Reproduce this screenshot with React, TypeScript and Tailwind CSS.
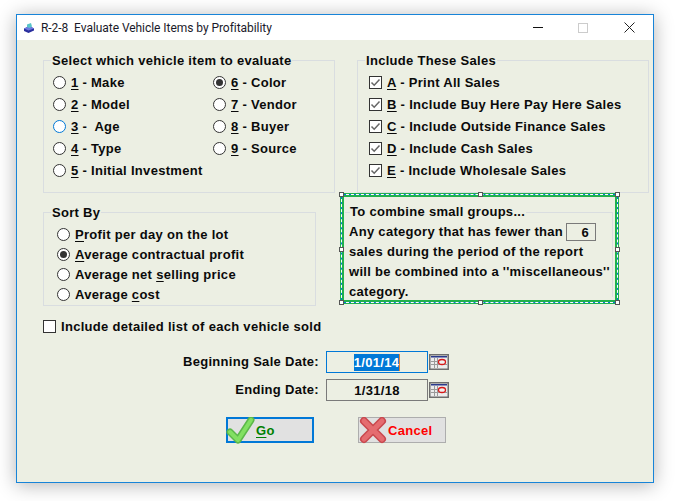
const font = "font-['Liberation_Sans',Arial,sans-serif] font-bold text-[13px] leading-none tracking-[0.3px] text-[#0a0a0a]";

const Radio = ({ checked, focus }: { checked?: boolean; focus?: boolean }) => (
  <span
    className={`flex h-[13px] w-[13px] shrink-0 items-center justify-center rounded-full border bg-white ${
      focus ? 'border-[#0078d7]' : 'border-[#333333]'
    }`}
  >
    {checked && <span className="h-[7px] w-[7px] rounded-full bg-[#333333]" />}
  </span>
);

const Check = ({ checked }: { checked?: boolean }) => (
  <span className="flex h-[13px] w-[13px] shrink-0 items-center justify-center border border-[#333333] bg-white">
    {checked && (
      <svg width="11" height="11" viewBox="0 0 11 11" fill="none">
        <path d="M1.5 5.5 L4.2 8.2 L9.5 2.5" stroke="#666666" strokeWidth="1.5" />
      </svg>
    )}
  </span>
);

const Group = ({ title, className, children }: { title: string; className: string; children: React.ReactNode }) => (
  <div className={`relative border border-[#d9dde0] ${className}`}>
    <span className={`absolute left-[7px] top-[-7px] whitespace-nowrap bg-[#ecefe3] px-px ${font}`}>{title}</span>
    {children}
  </div>
);

const RadioRow = ({ u, rest, checked, focus }: { u: string; rest: string; checked?: boolean; focus?: boolean }) => (
  <div className="flex h-[22px] items-center gap-[5px]">
    <Radio checked={checked} focus={focus} />
    <span className={`whitespace-pre ${font}`}>
      <u className="underline-offset-2">{u}</u>
      {rest}
    </span>
  </div>
);

const SortRow = ({ pre, u, rest, checked }: { pre?: string; u: string; rest: string; checked?: boolean }) => (
  <div className="flex h-[20px] items-center gap-[5px]">
    <Radio checked={checked} />
    <span className={`whitespace-pre ${font}`}>
      {pre}
      <u className="underline-offset-2">{u}</u>
      {rest}
    </span>
  </div>
);

const CheckRow = ({ u, rest }: { u: string; rest: string }) => (
  <div className="flex h-[22px] items-center gap-[5px]">
    <Check checked />
    <span className={`whitespace-pre ${font}`}>
      <u className="underline-offset-2">{u}</u>
      {rest}
    </span>
  </div>
);

const Handle = ({ className }: { className: string }) => (
  <span className={`absolute h-[5px] w-[5px] border border-[#555555] bg-white ${className}`} />
);

const CalendarIcon = () => (
  <svg width="20" height="16" viewBox="0 0 20 16" className="ml-px shrink-0">
    <rect x="0.75" y="0.75" width="18.500" height="14.500" fill="#ececec" stroke="#6e6e6e" strokeWidth="1.500" />
    <rect x="2" y="2" width="16" height="1.500" fill="#2a3a8c" />
    <path d="M5.500 4v10M8.500 4v10M2 7.500h8M2 10.500h16" stroke="#9a9a9a" fill="none" />
    <ellipse cx="13" cy="8" rx="3.500" ry="2.500" fill="#f0f0f0" stroke="#d81818" strokeWidth="1.300" />
  </svg>
);

const DateRow = ({ label, value, selected }: { label: string; value: string; selected?: boolean }) => (
  <div className="flex items-center">
    <span className={`w-[283px] pb-[2px] pr-[7px] text-right ${font}`}>{label}</span>
    <span
      className={`flex h-[22px] w-[102px] items-center justify-center border ${
        selected ? 'border-[#0078d7]' : 'border-[#7a7a7a]'
      }`}
    >
      <span className={`${font} ${selected ? 'border-r border-[#e08030] bg-[#0078d7] py-[2px] !text-white' : ''}`}>{value}</span>
    </span>
    <CalendarIcon />
  </div>
);

export default function App() {
  return (
    <div className="h-[501px] w-[679px] overflow-hidden bg-white pl-4 pt-[14px]">
      <div className="flex h-[469px] w-[638px] flex-col border border-[#1884d8] bg-[#ecefe3] shadow-[0_2px_18px_rgba(0,0,0,0.3)]">
        {/* Title bar */}
        <div className="flex h-[25px] shrink-0 items-center bg-white pl-[6px]">
          <svg width="12" height="12" viewBox="0 0 12 12" className="mt-px">
            <path d="M1 6.500 L6.500 4 L11 6.500 L11 8.500 L5.500 11 L1 9 Z" fill="#2a2f9e" />
            <path d="M1 6.500 L5.500 8.500 L11 6.500 L6.500 4 Z" fill="#6f7be0" />
            <path d="M4 5 L4 2.500 L8 1 L9 4.500 L6.500 6 Z" fill="#57c4c9" />
          </svg>
          <span className="ml-[6px] whitespace-pre font-['Roboto',sans-serif] text-[12px] leading-none tracking-[-0.05px] text-[#1a1a2a]">
            R-2-8  Evaluate Vehicle Items by Profitability
          </span>
          <div className="ml-auto flex items-center">
            <span className="h-[1px] w-[10px] bg-[#111111]" />
            <span className="ml-[35px] h-[10px] w-[10px] border border-[#cccccc]" />
            <svg width="11" height="11" viewBox="0 0 11 11" className="ml-[36px] mr-[18px]">
              <path d="M0.500 0.500 L10.500 10.500 M10.500 0.500 L0.500 10.500" stroke="#222222" strokeWidth="1" />
            </svg>
          </div>
        </div>

        {/* Body */}
        <div className="flex flex-col pl-[26px] pt-5">
          <div className="flex gap-[22px]">
            <Group title="Select which vehicle item to evaluate" className="h-[133px] w-[292px] pl-[9px] pt-[10px]">
              <div className="grid grid-cols-[160px_1fr]">
                <RadioRow u="1" rest=" - Make" />
                <RadioRow u="6" rest=" - Color" checked />
                <RadioRow u="2" rest=" - Model" />
                <RadioRow u="7" rest=" - Vendor" />
                <RadioRow u="3" rest=" -  Age" focus />
                <RadioRow u="8" rest=" - Buyer" />
                <RadioRow u="4" rest=" - Type" />
                <RadioRow u="9" rest=" - Source" />
                <RadioRow u="5" rest=" - Initial Investment" />
              </div>
            </Group>
            <Group title="Include These Sales" className="h-[133px] w-[292px] pl-[11px] pt-[10px]">
              <CheckRow u="A" rest=" - Print All Sales" />
              <CheckRow u="B" rest=" - Include Buy Here Pay Here Sales" />
              <CheckRow u="C" rest=" - Include Outside Finance Sales" />
              <CheckRow u="D" rest=" - Include Cash Sales" />
              <CheckRow u="E" rest=" - Include Wholesale Sales" />
            </Group>
          </div>

          <div className="flex items-start">
            <Group title="Sort By" className="mt-[19px] h-[94px] w-[273px] pl-[13px] pt-[11px]">
              <SortRow u="P" rest="rofit per day on the lot" />
              <SortRow u="A" rest="verage contractual profit" checked />
              <SortRow pre="Average net " u="s" rest="elling price" />
              <SortRow pre="Average " u="c" rest="ost" />
            </Group>

            {/* Selected note frame */}
            <div className="relative ml-[24px] h-[111px] w-[279px] border-[4px] border-[#22b14c]">
              <span className="absolute inset-[-3px] border border-[#0078d7]" />
              <span className="absolute inset-[-3px] border border-dashed border-white" />
              <Handle className="left-[-5px] top-[-5px]" />
              <Handle className="left-[134px] top-[-5px]" />
              <Handle className="right-[-5px] top-[-5px]" />
              <Handle className="left-[-5px] top-[50px]" />
              <Handle className="right-[-5px] top-[50px]" />
              <Handle className="bottom-[-5px] left-[-5px]" />
              <Handle className="bottom-[-5px] left-[134px]" />
              <Handle className="bottom-[-5px] right-[-5px]" />
              <div className="ml-px mt-[15px] h-[85px] w-[268px] border-r border-t border-[#d9dde0]" />
              <div className={`absolute left-[6px] top-[8px] whitespace-nowrap bg-[#ecefe3] pr-px ${font}`}>
                To combine small groups...
              </div>
              <div className="absolute left-[5px] top-[25px] flex h-[20px] items-center whitespace-nowrap">
                <span className={`w-[217px] pb-[2px] ${font}`}>Any category that has fewer than</span>
                <span className={`flex h-[18px] w-[30px] items-center justify-end border border-[#7a7a7a] pr-[6px] ${font}`}>
                  6
                </span>
              </div>
              <div className={`absolute left-[5px] top-[44px] flex flex-col whitespace-nowrap ${font}`}>
                <span className="flex h-[20px] items-center">sales during the period of the report</span>
                <span className="flex h-[20px] items-center">will be combined into a ''miscellaneous''</span>
                <span className="flex h-[20px] items-center">category.</span>
              </div>
            </div>
          </div>

          <div className="mt-[14px] flex h-[13px] items-center gap-[5px]">
            <Check />
            <span className={font}>Include detailed list of each vehicle sold</span>
          </div>

          <div className="mt-[18px] flex flex-col gap-[6px]">
            <DateRow label="Beginning Sale Date:" value="1/01/14" selected />
            <DateRow label="Ending Date:" value="1/31/18" />
          </div>

          <div className="ml-[183px] mt-4 flex gap-[44px]">
            <button className="relative flex h-[26px] w-[88px] items-center border-2 border-[#0078d7] bg-[#e1e1e1] pl-[28px]">
              <svg width="30" height="30" viewBox="0 0 30 30" fill="none" strokeLinecap="round" strokeLinejoin="round" className="absolute left-[-2px] top-[-2px]">
                <path d="M4 15 L12 23 L25 3" stroke="#5cb84a" strokeWidth="7" />
                <path d="M4 15 L12 23 L25 3" stroke="#82e062" strokeWidth="4" />
              </svg>
              <span className={`${font} !text-[#008000]`}>
                <u className="underline-offset-2">G</u>o
              </span>
            </button>
            <button className="relative flex h-[26px] w-[88px] items-center border border-[#adadad] bg-[#e1e1e1] pl-[29px]">
              <svg width="30" height="28" viewBox="0 0 30 28" fill="none" strokeLinecap="round" className="absolute left-[-1px] top-[-1px]">
                <path d="M6 4 L24 22 M24 4 L6 22" stroke="#c9484e" strokeWidth="8" />
                <path d="M6 4 L24 22 M24 4 L6 22" stroke="#e56c70" strokeWidth="5" />
              </svg>
              <span className={`${font} !text-[#ff0000]`}>Cancel</span>
            </button>
          </div>
        </div>
      </div>
    </div>
  );
}
